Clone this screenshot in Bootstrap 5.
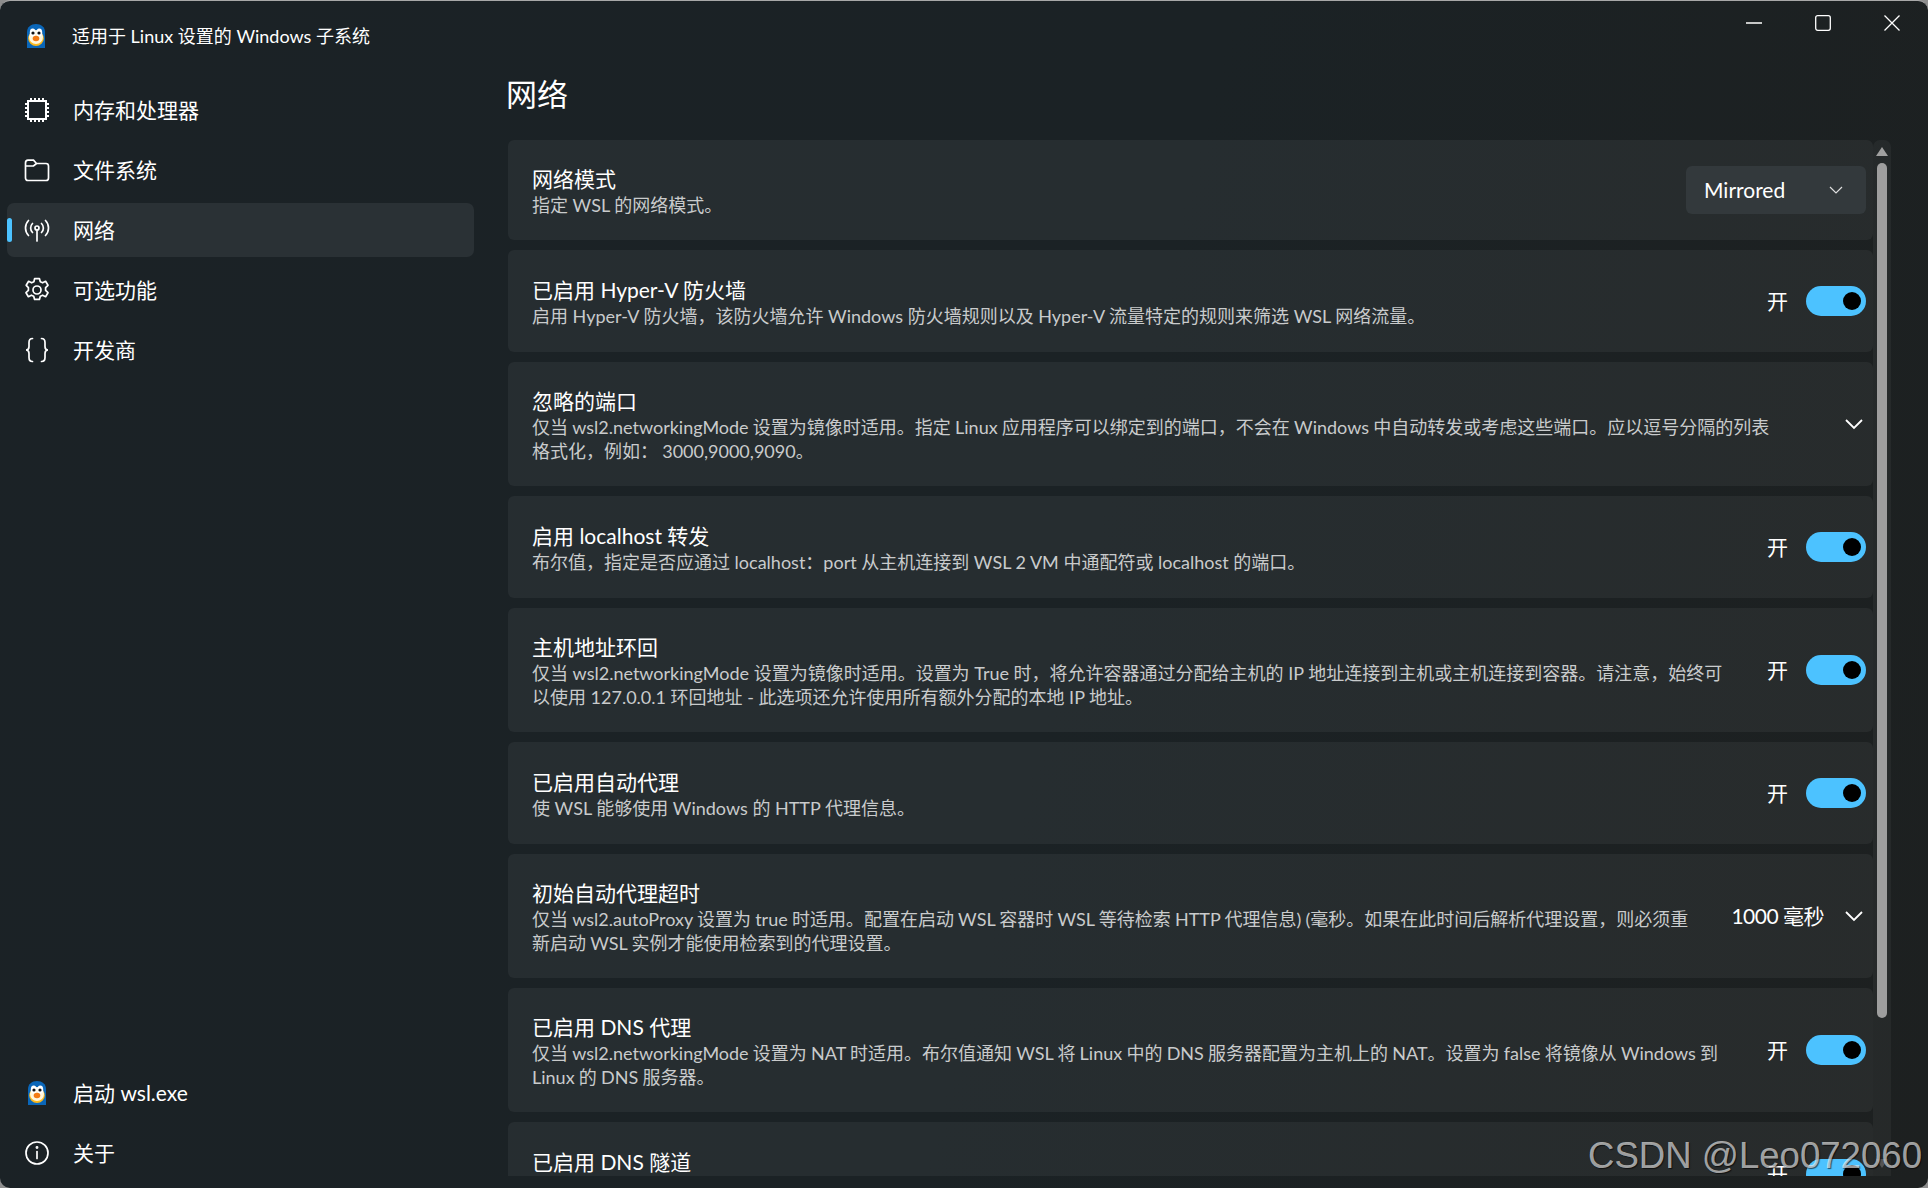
<!DOCTYPE html>
<html lang="zh">
<head>
<meta charset="utf-8">
<title>WSL</title>
<link href="https://cdn.jsdelivr.net/npm/bootstrap@5.3.0/dist/css/bootstrap.min.css" rel="stylesheet">
<style>
html,body{height:100%;margin:0;background:#8d8d8d;overflow:hidden}
body{font-family:"Lato","Noto Sans CJK SC",sans-serif;color:#fff}
.win{width:1928px;height:1188px;border-radius:10px;background:linear-gradient(105deg,#1b2226 0%,#1b2225 55%,#1d2020 100%);border-top:1px solid #a8a8a8;overflow:hidden;position:relative}
.side{width:508px;height:100%;padding-bottom:2px}
.ttl{height:82px;padding:0 0 12px 27px;font-size:18px;gap:27px}
.ttl svg{width:18px;height:24px;flex:none}
.nitem{height:54px;margin:0 34px 6px 7px;border-radius:7px;font-size:21px;padding-left:17px;gap:23px;position:relative}
.nitem.on{background:#2a3135}
.nitem.on::before{content:"";position:absolute;left:0;top:15px;width:5px;height:24px;border-radius:3px;background:#4cc2ff}
.nicon{width:26px;height:26px;flex:none}
.main{flex:1;min-width:0;height:100%}
.capt{height:43px;justify-content:flex-end;padding-right:2px}
.capt span{width:69px;display:flex;justify-content:center;align-items:center}
.pg{font-size:31px;line-height:1;margin:0 0 0 -2px;display:flex;align-items:center;font-weight:400;height:96px;padding-top:4px}
.scrollwrap{height:1036px;width:1383px;overflow:hidden}
.sbar{width:18px;height:1036px;background:rgba(255,255,255,.045);border-radius:7px 7px 0 0;position:relative;flex:none}
.sbar::before{content:"";position:absolute;left:3px;top:7px;border:6px solid transparent;border-top:0;border-bottom:9px solid #a0a0a0}
.sbar::after{content:"";position:absolute;left:3px;bottom:8px;border:6px solid transparent;border-bottom:0;border-top:9px solid #555}
.sthumb{position:absolute;left:4px;top:23px;width:10px;height:855px;border-radius:5px;background:#9e9e9e}
.cards{width:1365px}
.rowc{background:rgba(255,255,255,.05);border-radius:6px;margin-bottom:10px;padding:0 7px 0 24px;display:flex;align-items:center;min-height:102px}
.rowc.h100{min-height:100px}
.rowc.tall{min-height:124px}
.rowc.lastc{align-items:flex-start;padding-top:26px}
.lastc .ctl{margin-top:10px}
.rt{font-size:21px;line-height:27px}
.rd{font-size:18px;line-height:23.4px;color:#c9cbcc;margin-top:2px}
.rd.tight{word-spacing:-.4px}
.rbody{flex:1;min-width:0;padding-top:2px}
.lastc .rbody{padding-top:0}
.ctl{flex:none;display:flex;align-items:center;font-size:21px}
.onl{margin-right:18px}
.onl.vals{letter-spacing:-.5px;margin-right:21px}
.tg{width:60px;height:30px;border-radius:15px;background:#4cc2ff;position:relative;flex:none}
.tg::after{content:"";position:absolute;right:5px;top:6px;width:18px;height:18px;border-radius:50%;background:#000}
.drop{width:180px;height:48px;border-radius:6px;background:#33393c;padding:0 23px 0 18px;display:flex;align-items:center;justify-content:space-between;font-size:21px}
.chev{width:18px;height:12px;margin-right:3px}
.wm{position:absolute;right:6px;bottom:13px;font-family:"Liberation Sans",sans-serif;font-size:36.6px;line-height:1;color:rgba(255,255,255,.62);text-shadow:1px 1px 1px rgba(0,0,0,.6)}
</style>
</head>
<body>
<svg width="0" height="0" class="position-absolute"><defs>
<symbol id="tux" viewBox="0 0 18 24">
<path d="M0 24V8C0 3 4 0 9 0s9 3 9 8v16z" fill="#0a66b8"/>
<ellipse cx="9" cy="14.500" rx="7.800" ry="7.500" fill="#fbb81c"/>
<ellipse cx="9" cy="13" rx="7" ry="7" fill="#fff6dc"/>
<ellipse cx="5.700" cy="8.500" rx="2.900" ry="4" fill="#fff"/><ellipse cx="12.300" cy="8.500" rx="2.900" ry="4" fill="#fff"/>
<circle cx="6" cy="9" r="1.600" fill="#111"/><circle cx="12" cy="9" r="1.600" fill="#111"/>
<ellipse cx="9" cy="14.500" rx="3.300" ry="2.700" fill="#f37a14"/>
</symbol>
</defs></svg>
<div class="win d-flex">
  <div class="side d-flex flex-column">
    <div class="ttl d-flex align-items-center"><svg><use href="#tux"/></svg><span>适用于 Linux 设置的 Windows 子系统</span></div>
    <div class="nitem d-flex align-items-center"><svg class="nicon" viewBox="0 0 26 26" fill="none" stroke="#fff" stroke-width="1.600" shape-rendering="crispEdges"><rect x="4" y="4" width="18" height="18"/><path d="M7 1v3M11 1v3M15 1v3M19 1v3M7 22v3M11 22v3M15 22v3M19 22v3M1 7h3M1 11h3M1 15h3M1 19h3M22 7h3M22 11h3M22 15h3M22 19h3"/></svg><span>内存和处理器</span></div>
    <div class="nitem d-flex align-items-center"><svg class="nicon" viewBox="0 0 26 26" fill="none" stroke="#fff" stroke-width="1.700"><path d="M1.500 6c0-1.700 1-2.800 2.500-2.800h5.500l3 3.300H22c1.500 0 2.500 1 2.500 2.500V21c0 1.500-1 2.500-2.500 2.500H4c-1.500 0-2.500-1-2.500-2.500zM1.500 9h8l3-2.500"/></svg><span>文件系统</span></div>
    <div class="nitem on d-flex align-items-center"><svg class="nicon" viewBox="0 0 26 26" fill="none" stroke="#fff" stroke-width="1.700" stroke-linecap="round"><circle cx="13" cy="11" r="2"/><path d="M13 13v11M8.500 6.500c-2.500 2.500-2.500 6.500 0 9M17.500 6.500c2.500 2.500 2.500 6.500 0 9M4.500 3.500c-4 4-4 11 0 15M21.500 3.500c4 4 4 11 0 15"/></svg><span>网络</span></div>
    <div class="nitem d-flex align-items-center"><svg class="nicon" viewBox="0 0 26 26" fill="none" stroke="#fff" stroke-width="1.700" stroke-linejoin="round"><circle cx="13" cy="13" r="4"/><path d="M10.600 1.600h4.800l.9 3.200 2.300 1 3-1.500 2.400 4-2.400 2.300v2.800l2.400 2.300-2.400 4-3-1.500-2.300 1-.9 3.200h-4.800l-.9-3.200-2.300-1-3 1.500-2.400-4 2.400-2.300v-2.800L2.200 8.300l2.400-4 3 1.500 2.300-1z"/></svg><span>可选功能</span></div>
    <div class="nitem d-flex align-items-center"><svg class="nicon" viewBox="0 0 26 26" fill="none" stroke="#fff" stroke-width="1.700" stroke-linecap="round"><path d="M8.500 1.500c-3 0-3.500 1.500-3.500 4v4c0 2-.8 3.500-3 3.500 2.200 0 3 1.500 3 3.500v4c0 2.500.5 4 3.500 4M17.500 1.500c3 0 3.500 1.500 3.500 4v4c0 2 .8 3.500 3 3.500-2.200 0-3 1.500-3 3.500v4c0 2.500-.5 4-3.500 4"/></svg><span>开发商</span></div>
    <div class="mt-auto"></div>
    <div class="nitem d-flex align-items-center"><svg class="nicon" viewBox="0 0 26 26"><use href="#tux" x="4" y="1" width="18" height="24"/></svg><span>启动 wsl.exe</span></div>
    <div class="nitem d-flex align-items-center"><svg class="nicon" viewBox="0 0 26 26" fill="none" stroke="#fff" stroke-width="1.700" stroke-linecap="round"><circle cx="13" cy="13" r="11"/><path d="M13 11.500v7"/><circle cx="13" cy="7.500" r=".6" fill="#fff"/></svg><span>关于</span></div>
  </div>
  <div class="main d-flex flex-column">
    <div class="capt d-flex"><span><svg width="16" height="2"><path d="M0 1h16" stroke="#fff" stroke-width="1.500"/></svg></span><span><svg width="16" height="16" fill="none" stroke="#fff" stroke-width="1.300"><rect x=".7" y=".7" width="14.600" height="14.600" rx="2"/></svg></span><span><svg width="16" height="16" stroke="#fff" stroke-width="1.300"><path d="M.5.500l15 15M15.500.500l-15 15"/></svg></span></div>
    <h1 class="pg">网络</h1>
    <div class="d-flex scrollwrap">
      <div class="cards">
        <div class="rowc h100"><div class="rbody"><div class="rt">网络模式</div><div class="rd">指定 WSL 的网络模式。</div></div><div class="ctl"><div class="drop"><span>Mirrored</span><svg width="14" height="9" fill="none" stroke="#ddd" stroke-width="1.200"><path d="M1 1l6 6 6-6"/></svg></div></div></div>
        <div class="rowc"><div class="rbody"><div class="rt">已启用 Hyper-V 防火墙</div><div class="rd">启用 Hyper-V 防火墙，该防火墙允许 Windows 防火墙规则以及 Hyper-V 流量特定的规则来筛选 WSL 网络流量。</div></div><div class="ctl"><span class="onl">开</span><div class="tg"></div></div></div>
        <div class="rowc tall"><div class="rbody"><div class="rt">忽略的端口</div><div class="rd tight">仅当 wsl2.networkingMode 设置为镜像时适用。指定 Linux 应用程序可以绑定到的端口，不会在 Windows 中自动转发或考虑这些端口。应以逗号分隔的列表<br>格式化，例如： 3000,9000,9090。</div></div><div class="ctl"><svg class="chev" viewBox="0 0 18 12" fill="none" stroke="#fff" stroke-width="1.800"><path d="M1 2l8 8 8-8"/></svg></div></div>
        <div class="rowc"><div class="rbody"><div class="rt">启用 localhost 转发</div><div class="rd">布尔值，指定是否应通过 localhost：port 从主机连接到 WSL 2 VM 中通配符或 localhost 的端口。</div></div><div class="ctl"><span class="onl">开</span><div class="tg"></div></div></div>
        <div class="rowc tall"><div class="rbody"><div class="rt">主机地址环回</div><div class="rd">仅当 wsl2.networkingMode 设置为镜像时适用。设置为 True 时，将允许容器通过分配给主机的 IP 地址连接到主机或主机连接到容器。请注意，始终可<br>以使用 127.0.0.1 环回地址 - 此选项还允许使用所有额外分配的本地 IP 地址。</div></div><div class="ctl"><span class="onl">开</span><div class="tg"></div></div></div>
        <div class="rowc"><div class="rbody"><div class="rt">已启用自动代理</div><div class="rd">使 WSL 能够使用 Windows 的 HTTP 代理信息。</div></div><div class="ctl"><span class="onl">开</span><div class="tg"></div></div></div>
        <div class="rowc tall"><div class="rbody"><div class="rt">初始自动代理超时</div><div class="rd tight">仅当 wsl2.autoProxy 设置为 true 时适用。配置在启动 WSL 容器时 WSL 等待检索 HTTP 代理信息) (毫秒。如果在此时间后解析代理设置，则必须重<br>新启动 WSL 实例才能使用检索到的代理设置。</div></div><div class="ctl"><span class="onl vals">1000 毫秒</span><svg class="chev" viewBox="0 0 18 12" fill="none" stroke="#fff" stroke-width="1.800"><path d="M1 2l8 8 8-8"/></svg></div></div>
        <div class="rowc tall"><div class="rbody"><div class="rt">已启用 DNS 代理</div><div class="rd tight">仅当 wsl2.networkingMode 设置为 NAT 时适用。布尔值通知 WSL 将 Linux 中的 DNS 服务器配置为主机上的 NAT。设置为 false 将镜像从 Windows 到<br>Linux 的 DNS 服务器。</div></div><div class="ctl"><span class="onl">开</span><div class="tg"></div></div></div>
        <div class="rowc lastc"><div class="rbody"><div class="rt">已启用 DNS 隧道</div></div><div class="ctl"><span class="onl">开</span><div class="tg"></div></div></div>
      </div>
      <div class="sbar"><div class="sthumb"></div></div>
    </div>
  </div>
  <div class="wm">CSDN @Leo072060</div>
</div>
</body>
</html>
